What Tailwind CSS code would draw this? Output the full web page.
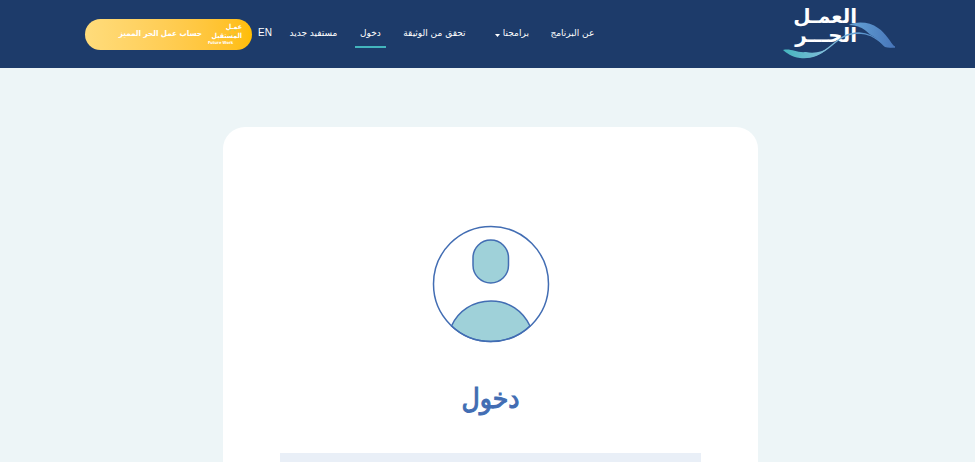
<!DOCTYPE html>
<html lang="ar" dir="rtl">

<head>
    <meta charset="UTF-8">
    <meta name="viewport" content="width=device-width, initial-scale=1.0">
    <title>العمل الحر - دخول</title>
    <script src="https://cdn.jsdelivr.net/npm/@tailwindcss/browser@4"></script>
</head>

<body class="flex min-h-screen flex-col overflow-x-hidden bg-[#edf5f7] font-['DejaVu_Sans',sans-serif]">
    <header class="flex h-[68px] shrink-0 items-center bg-[#1d3b6a] pr-20 pl-[85px] text-white">
        <a href="#" aria-label="العمل الحر">
            <svg class="h-[52px] w-[113px] overflow-visible" viewBox="0 0 113 52" fill="none">
                <defs>
                    <linearGradient id="wave" x1="0" y1="0" x2="113" y2="0" gradientUnits="userSpaceOnUse">
                        <stop offset="0" stop-color="#43b5bd" />
                        <stop offset=".4" stop-color="#83bedb" />
                        <stop offset=".7" stop-color="#5d98cf" />
                        <stop offset="1" stop-color="#4775b9" />
                    </linearGradient>
                </defs>
                <g fill="#fff" direction="rtl" font-weight="bold" font-size="20">
                    <text x="75" y="15">العمـل</text>
                    <text x="75" y="34">الحـــر</text>
                </g>
                <path fill="url(#wave)" d="M1 42C9 40 14 45 24 44C33 46 42 43 46 40C37 49 27 51 18 50C9 49 5 45 1 42Z" />
                <path stroke="url(#wave)" stroke-width="1.3" d="M23 49C49 48 52 25 77 25C96 26 98 39 113 39" />
                <path fill="url(#wave)" d="M67 17C75 13 88 14 96 20C104 25 108 34 113 39C110 40 106 40 103 39C98 35 95 30 89 27C84 24 82 18 67 17Z" />
            </svg>
        </a>

        <nav class="mr-auto flex items-center gap-3 text-[9px] leading-[26px] whitespace-nowrap">
            <a href="#" class="w-[53px] border-b-2 border-transparent text-center">عن البرنامج</a>
            <button class="flex w-[51px] items-center gap-[3px] border-b-2 border-transparent pr-[5px]">
                برامجنا
                <svg class="mt-1 h-[3px] w-[5px]" viewBox="0 0 5 3" fill="#fff"><path d="M0 0H5L2.5 3Z" /></svg>
            </button>
            <a href="#" class="w-[73px] border-b-2 border-transparent text-center">تحقق من الوثيقة</a>
            <a href="#" class="w-[31px] border-b-2 border-[#43b5bd] text-center">دخول</a>
            <a href="#" class="w-[59px] border-b-2 border-transparent text-center">مستفيد جديد</a>
            <a href="#" class="border-b-2 border-transparent font-['Liberation_Sans',sans-serif] text-[10px]">EN</a>
        </nav>

        <a href="#" class="mr-[6px] flex h-[31px] w-[167px] items-center gap-[6px] rounded-full bg-linear-to-r from-[#ffdc7b] to-[#ffbd00] pr-[10px] font-['DejaVu_Sans_Condensed','DejaVu_Sans',sans-serif] text-[8px] font-bold whitespace-nowrap">
            <svg class="h-5 w-[34px] shrink-0 overflow-visible" viewBox="0 0 34 20">
                <g fill="#fff" direction="rtl">
                    <text x="34" y="5" font-size="7">عمـل</text>
                    <text x="34" y="14" font-size="7">المستقبل</text>
                    <text x="0" y="20" direction="ltr" font-size="4">Future Work</text>
                </g>
                <g fill="#9ccc65">
                    <circle cx="22" cy="6" r=".7" />
                    <circle cx="27" cy="6" r=".7" />
                    <circle cx="22" cy="11" r=".7" />
                    <circle cx="27" cy="11" r=".7" />
                </g>
            </svg>
            حساب عمل الحر المميز
        </a>
    </header>

    <main class="mt-[59px] mr-[217px] ml-[223px] flex flex-1 flex-col items-center rounded-t-[22px] bg-white px-[57px] pt-[98px]">
        <svg class="size-[118px] shrink-0" viewBox="0 0 118 118" fill="none" stroke="#426db3" stroke-width="1.5">
            <path fill="#9fd1d9" d="M19.500 101C26 86 41 76 59 76S91 86 98 101A57.500 57.500 0 0 1 19.500 101Z" />
            <circle cx="59" cy="59" r="57.500" />
            <rect x="41" y="15" width="35.500" height="43" rx="17.750" fill="#9fd1d9" />
        </svg>
        <h1 class="mt-9 font-['DejaVu_Sans_Condensed','DejaVu_Sans',sans-serif] text-[28px] leading-10 text-[#426db3] [-webkit-text-stroke:1px_#426db3]">دخول</h1>
        <div class="mt-[34px] w-full flex-1 bg-[#e9eff7]"></div>
    </main>
</body>

</html>
